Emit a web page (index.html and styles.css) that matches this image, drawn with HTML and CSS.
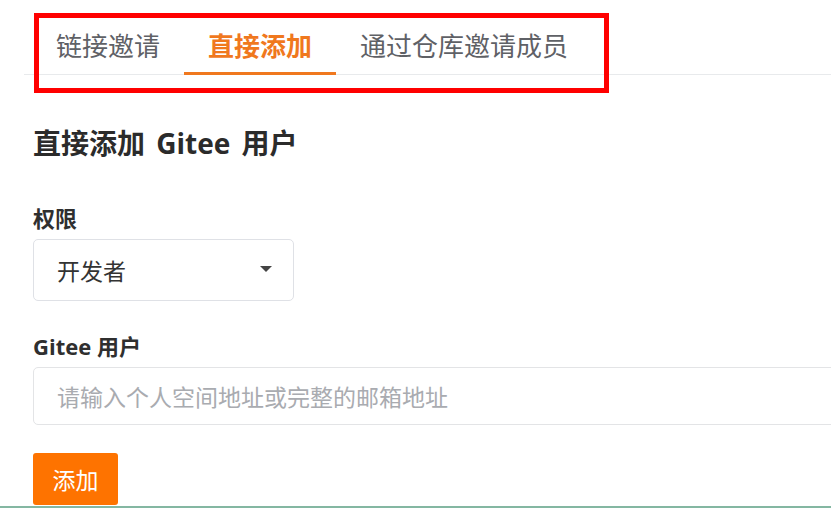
FILE: index.html
```html
<!DOCTYPE html>
<html lang="zh-CN">
<head>
<meta charset="utf-8">
<title>直接添加 Gitee 用户</title>
<link rel="stylesheet" href="styles.css">
</head>
<body>
<div class="page">
  <nav class="tabs">
    <a class="tab">链接邀请</a>
    <a class="tab active">直接添加</a>
    <a class="tab">通过仓库邀请成员</a>
  </nav>
  <div class="content">
    <h2 class="title">直接添加 Gitee 用户</h2>
    <div class="field">
      <label class="label">权限</label>
      <div class="select">
        <span class="select-text">开发者</span>
        <span class="caret"></span>
      </div>
    </div>
    <div class="field">
      <label class="label">Gitee 用户</label>
      <input class="input" type="text" placeholder="请输入个人空间地址或完整的邮箱地址">
    </div>
    <button class="btn">添加</button>
  </div>
  <div class="bottom-rule"></div>
  <div class="highlight"></div>
</div>
</body>
</html>
```

FILE: styles.css
```css
html, body {
  margin: 0;
  padding: 0;
  background: #ffffff;
  overflow: hidden;
}
body {
  font-family: "Open Sans", "Noto Sans CJK SC", sans-serif;
  color: #333333;
}
.page {
  position: relative;
  width: 831px;
  height: 516px;
}
.tabs {
  display: flex;
  margin-left: 24px;
  padding-left: 8px;
  padding-top: 28px;
  border-bottom: 1px solid #e8eaec;
}
.tab {
  display: block;
  padding: 0 24px 10px;
  font-family: "Noto Sans CJK SC", sans-serif;
  font-size: 26px;
  line-height: 34px;
  color: #5f6166;
  border-bottom: 3px solid transparent;
  margin-bottom: -1px;
}
.tab.active {
  color: #f0781e;
  font-weight: 700;
  border-bottom-color: #f0781e;
}
.content {
  padding-left: 33px;
}
.title {
  margin: 48px 0 0;
  font-size: 28px;
  line-height: 40px;
  font-weight: 700;
  color: #2b2b2b;
  word-spacing: 4px;
}
.field {
  display: flex;
  flex-direction: column;
}
.field + .field {
  margin-top: 30px;
}
.title + .field {
  margin-top: 40px;
}
.label {
  font-size: 22px;
  line-height: 30px;
  font-weight: 700;
  color: #2f2f2f;
}
.select {
  margin-top: 6px;
  box-sizing: border-box;
  width: 261px;
  height: 62px;
  border: 1px solid #dfe1e6;
  border-radius: 5px;
  display: flex;
  align-items: center;
  justify-content: space-between;
  padding: 0 21px 0 23px;
}
.select-text {
  font-family: "Noto Sans CJK SC", sans-serif;
  font-size: 23px;
  color: #333333;
}
.caret {
  width: 0;
  height: 0;
  border-left: 6px solid transparent;
  border-right: 6px solid transparent;
  border-top: 6px solid #444444;
  margin-top: -2px;
}
.input {
  margin-top: 6px;
  box-sizing: border-box;
  width: 830px;
  height: 58px;
  border: 1px solid #e3e4e6;
  border-radius: 5px;
  padding: 0 23px;
  font-family: "Noto Sans CJK SC", sans-serif;
  font-size: 23px;
  outline: none;
}
.input::placeholder {
  color: #a9abb0;
}
.btn {
  display: block;
  margin-top: 28px;
  width: 85px;
  height: 52px;
  border: none;
  border-radius: 3px;
  background: #fe7300;
  color: #ffffff;
  font-family: "Noto Sans CJK SC", sans-serif;
  font-size: 23px;
  padding: 0;
}
.bottom-rule {
  margin-top: 1px;
  height: 2px;
  background: #84b7a2;
}
.highlight {
  position: absolute;
  left: 34px;
  top: 13px;
  width: 575px;
  height: 80px;
  box-sizing: border-box;
  border: 5px solid #ff0000;
  pointer-events: none;
}
```
